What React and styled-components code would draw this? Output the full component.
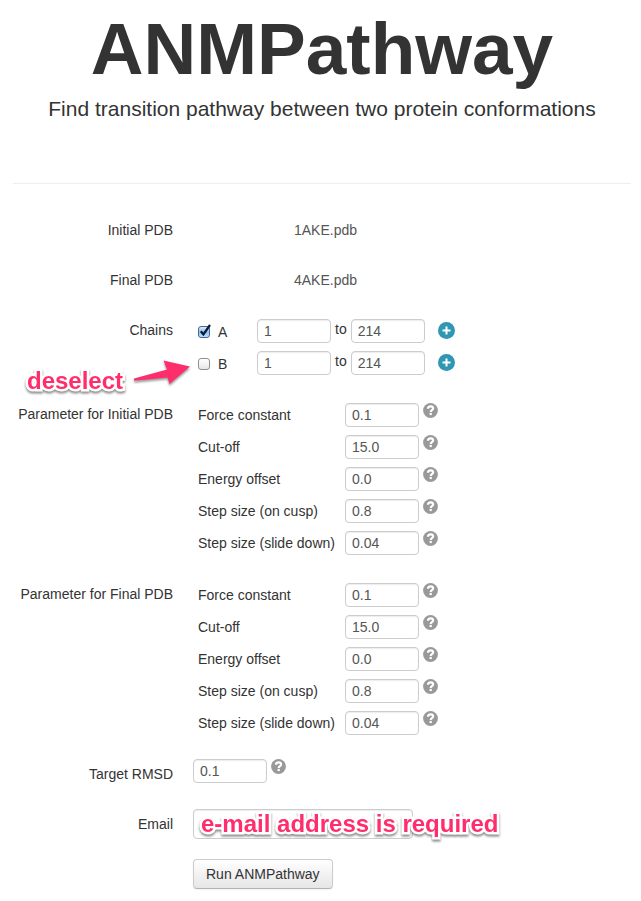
import React, { useState } from "react";
import styled, { createGlobalStyle } from "styled-components";

const GlobalStyle = createGlobalStyle`
  *, *::before, *::after { box-sizing: border-box; }
  body {
    margin: 0;
    background: #fff;
    color: #333;
    font-family: "Liberation Sans", Arial, sans-serif;
    font-size: 14px;
    line-height: 20px;
  }
`;

const Page = styled.main`
  padding: 12px 10px 12px 13px;
`;

const Header = styled.header`
  text-align: center;
  padding-bottom: 59px;
  border-bottom: 1px solid #eee;
`;

const Title = styled.h1`
  margin: 0;
  font-size: 73px;
  line-height: 73px;
  font-weight: 700;
`;

const Tagline = styled.p`
  margin: 9px 0 0;
  font-size: 21px;
  line-height: 30px;
`;

const Form = styled.form`
  display: flex;
  flex-direction: column;
  gap: 20px;
  padding-top: 31px;
`;

const Group = styled.div`
  display: grid;
  grid-template-columns: 160px minmax(0, 1fr);
  column-gap: 20px;
  align-items: start;
  min-height: 30px;
`;

const GroupLabel = styled.label`
  padding-top: 5px;
  text-align: right;
  white-space: nowrap;
`;

const FileName = styled.output`
  padding: 5px 0 0 101px;
  color: #555;
`;

const Field = styled.input`
  width: ${(p) => (p.$wide ? "220px" : "74px")};
  height: ${(p) => (p.$wide ? "30px" : "24px")};
  padding: 2px 6px;
  border: 1px solid #ccc;
  border-radius: 4px;
  background: #fff;
  box-shadow: inset 0 1px 1px rgba(0, 0, 0, 0.075);
  color: #555;
  font: inherit;
`;

const ChainRow = styled.div`
  position: relative;
  display: flex;
  align-items: center;
  height: 32px;
  padding-left: 5px;
`;

const ChainName = styled.label`
  display: flex;
  align-items: center;
  gap: 8px;
  width: 59px;
  padding-top: 2px;
`;

const TickBox = styled.span`
  display: grid;
  width: 12px;
  height: 12px;
  > * { grid-area: 1 / 1; }
`;

const Check = styled.input`
  appearance: none;
  width: 12px;
  height: 12px;
  margin: 0;
  border: 1px solid #8f8f8f;
  border-radius: 3px;
  background: linear-gradient(#fff, #f4f4f4 50%, #e6e6e6);
  &:checked {
    border-color: #4a6297;
    background: linear-gradient(#dcebfa, #8fc0ee 50%, #b9e4ff);
  }
`;

const Tick = styled.svg`
  overflow: visible;
  pointer-events: none;
`;

const Between = styled.span`
  padding: 0 4px 4px;
`;

const IconButton = styled.button`
  display: flex;
  margin: 0 0 0 ${(p) => (p.$far ? "13px" : "4px")};
  padding: 0 0 ${(p) => (p.$far ? "2px" : "0")};
  border: 0;
  background: none;
  cursor: pointer;
`;

const ParamRow = styled.div`
  display: grid;
  grid-template-columns: 147px 74px auto;
  justify-content: start;
  align-items: center;
  height: 32px;
  padding-left: 5px;
`;

const HelpSlot = styled.span`
  align-self: start;
  padding-top: ${(p) => (p.$flush ? "0" : "4px")};
`;

const Inline = styled.div`
  position: relative;
  display: flex;
  align-items: flex-start;
`;

const RunButton = styled.button`
  justify-self: start;
  grid-column: 2;
  height: 30px;
  padding: 0 12px;
  border: 1px solid #ccc;
  border-bottom-color: #b3b3b3;
  border-radius: 4px;
  background: linear-gradient(#fff, #e6e6e6);
  box-shadow: inset 0 1px 0 rgba(255, 255, 255, 0.2), 0 1px 2px rgba(0, 0, 0, 0.05);
  color: #333;
  font: inherit;
  white-space: nowrap;
`;

const Note = styled.strong`
  position: absolute;
  left: ${(p) => p.$left};
  top: ${(p) => p.$top};
  color: #ff2d6b;
  font-size: 24px;
  line-height: 28px;
  white-space: nowrap;
  pointer-events: none;
  -webkit-text-stroke: 5px #fff;
  paint-order: stroke fill;
  filter: drop-shadow(0 2px 1px rgba(0, 0, 0, 0.45));
`;

const Arrow = styled.svg`
  position: absolute;
  left: -60px;
  top: 11px;
  pointer-events: none;
  filter: drop-shadow(0 2px 1px rgba(0, 0, 0, 0.4));
`;

function Help({ topic, flush }) {
  return (
    <HelpSlot $flush={flush}>
      <IconButton type="button" aria-label={`Help: ${topic}`}>
        <svg width="15" height="15" viewBox="0 0 15 15">
          <circle cx="7.5" cy="7.5" r="7.4" fill="#999" />
          <path
            d="M5 5.8C5 4.1 6.1 3.4 7.6 3.4S10.1 4.2 10.1 5.5C10.1 7.1 7.7 7 7.7 8.9"
            fill="none"
            stroke="#fff"
            strokeWidth="2.2"
          />
          <rect x="6.6" y="9.9" width="2.2" height="2.2" fill="#fff" />
        </svg>
      </IconButton>
    </HelpSlot>
  );
}

function Chain({ name, initial, children }) {
  const [on, setOn] = useState(initial);
  return (
    <ChainRow>
      <ChainName>
        <TickBox>
          <Check type="checkbox" checked={on} onChange={(e) => setOn(e.target.checked)} />
          {on && (
            <Tick width="12" height="12" viewBox="0 0 12 12" aria-hidden="true">
              <path d="M2.8 5.2L5.4 8.4L12 -1" fill="none" stroke="#0d1a33" strokeWidth="2.2" />
            </Tick>
          )}
        </TickBox>
        {name}
      </ChainName>
      <Field defaultValue="1" aria-label={`Chain ${name} first residue`} />
      <Between>to</Between>
      <Field defaultValue="214" aria-label={`Chain ${name} last residue`} />
      <IconButton type="button" $far aria-label={`Add range to chain ${name}`}>
        <svg width="17" height="17" viewBox="0 0 17 17">
          <circle cx="8.5" cy="8.5" r="8.5" fill="#2f96b4" />
          <path d="M8.5 4.5V12.5M4.5 8.5H12.5" stroke="#fff" strokeWidth="2" />
        </svg>
      </IconButton>
      {children}
    </ChainRow>
  );
}

const PARAMS = [
  ["Force constant", "0.1"],
  ["Cut-off", "15.0"],
  ["Energy offset", "0.0"],
  ["Step size (on cusp)", "0.8"],
  ["Step size (slide down)", "0.04"],
];

function Parameters({ id, title }) {
  return (
    <Group role="group" aria-labelledby={id}>
      <GroupLabel as="span" id={id}>{title}</GroupLabel>
      <div>
        {PARAMS.map(([label, value], i) => (
          <ParamRow key={label}>
            <label htmlFor={`${id}-${i}`}>{label}</label>
            <Field id={`${id}-${i}`} defaultValue={value} />
            <Help topic={label} />
          </ParamRow>
        ))}
      </div>
    </Group>
  );
}

export default function App() {
  return (
    <Page>
      <GlobalStyle />
      <Header>
        <Title>ANMPathway</Title>
        <Tagline>Find transition pathway between two protein conformations</Tagline>
      </Header>
      <Form onSubmit={(e) => e.preventDefault()}>
        <Group>
          <GroupLabel htmlFor="initial-pdb">Initial PDB</GroupLabel>
          <FileName id="initial-pdb">1AKE.pdb</FileName>
        </Group>
        <Group>
          <GroupLabel htmlFor="final-pdb">Final PDB</GroupLabel>
          <FileName id="final-pdb">4AKE.pdb</FileName>
        </Group>
        <Group role="group" aria-labelledby="chains">
          <GroupLabel as="span" id="chains">Chains</GroupLabel>
          <div>
            <Chain name="A" initial={true} />
            <Chain name="B" initial={false}>
              <Note $left="-166px" $top="20px">deselect</Note>
              <Arrow width="60" height="30" viewBox="0 0 60 30" aria-hidden="true">
                <path d="M1 20.5L34 11.5L30.5 2.5L57 8.5L36.5 26L34.5 19.5L1 22.8Z" fill="#ff2d6b" />
              </Arrow>
            </Chain>
          </div>
        </Group>
        <Parameters id="initial-params" title="Parameter for Initial PDB" />
        <Parameters id="final-params" title="Parameter for Final PDB" />
        <Group>
          <GroupLabel htmlFor="rmsd">Target RMSD</GroupLabel>
          <Inline>
            <Field id="rmsd" defaultValue="0.1" />
            <Help topic="Target RMSD" flush />
          </Inline>
        </Group>
        <Group>
          <GroupLabel htmlFor="email">Email</GroupLabel>
          <Inline>
            <Field id="email" type="email" $wide />
            <Note $left="8px" $top="1px">e-mail address is required</Note>
          </Inline>
        </Group>
        <Group>
          <RunButton type="submit">Run ANMPathway</RunButton>
        </Group>
      </Form>
    </Page>
  );
}
